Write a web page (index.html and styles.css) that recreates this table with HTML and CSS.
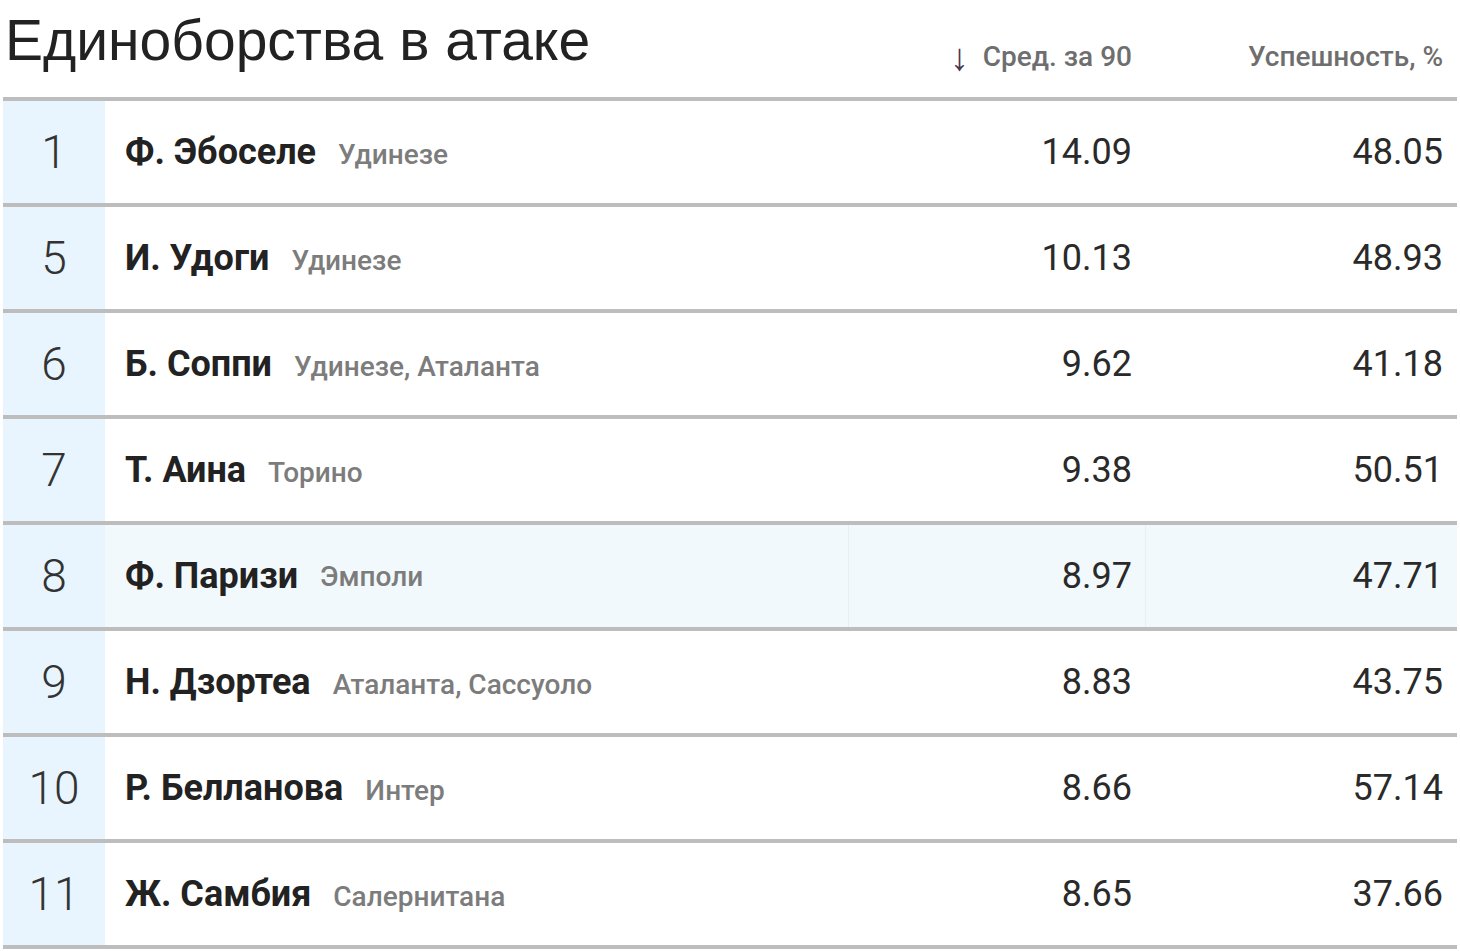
FILE: index.html
```html
<!DOCTYPE html>
<html lang="ru">
<head>
<meta charset="utf-8">
<title>Единоборства в атаке</title>
<link rel="stylesheet" href="styles.css">
</head>
<body>
<div class="board">
  <div class="head">
    <h1 class="title">Единоборства в атаке</h1>
    <div class="hcell sorted"><span class="arrow">↓</span>Сред. за 90</div>
    <div class="hcell">Успешность, %</div>
  </div>
  <div class="row">
    <div class="rank">1</div>
    <div class="player"><span class="name">Ф. Эбоселе</span><span class="team">Удинезе</span></div>
    <div class="num">14.09</div>
    <div class="num last">48.05</div>
  </div>
  <div class="row">
    <div class="rank">5</div>
    <div class="player"><span class="name">И. Удоги</span><span class="team">Удинезе</span></div>
    <div class="num">10.13</div>
    <div class="num last">48.93</div>
  </div>
  <div class="row">
    <div class="rank">6</div>
    <div class="player"><span class="name">Б. Соппи</span><span class="team">Удинезе, Аталанта</span></div>
    <div class="num">9.62</div>
    <div class="num last">41.18</div>
  </div>
  <div class="row">
    <div class="rank">7</div>
    <div class="player"><span class="name">Т. Аина</span><span class="team">Торино</span></div>
    <div class="num">9.38</div>
    <div class="num last">50.51</div>
  </div>
  <div class="row hover">
    <div class="rank">8</div>
    <div class="player"><span class="name">Ф. Паризи</span><span class="team">Эмполи</span></div>
    <div class="num">8.97</div>
    <div class="num last">47.71</div>
  </div>
  <div class="row">
    <div class="rank">9</div>
    <div class="player"><span class="name">Н. Дзортеа</span><span class="team">Аталанта, Сассуоло</span></div>
    <div class="num">8.83</div>
    <div class="num last">43.75</div>
  </div>
  <div class="row">
    <div class="rank">10</div>
    <div class="player"><span class="name">Р. Белланова</span><span class="team">Интер</span></div>
    <div class="num">8.66</div>
    <div class="num last">57.14</div>
  </div>
  <div class="row">
    <div class="rank">11</div>
    <div class="player"><span class="name">Ж. Самбия</span><span class="team">Салернитана</span></div>
    <div class="num">8.65</div>
    <div class="num last">37.66</div>
  </div>
</div>
</body>
</html>
```

FILE: styles.css
```css
html, body {
  margin: 0;
  padding: 0;
  background: #ffffff;
}

.board {
  width: 1454px;
  margin-left: 3px;
  font-family: Roboto, "Noto Sans", sans-serif;
}

.head,
.row {
  display: grid;
  grid-template-columns: 102px 743px 297px 312px;
  border-bottom: 4px solid #bdbdbd;
}

.head {
  height: 97px;
  align-items: end;
}

.title {
  grid-column: 1 / 3;
  margin: 0 0 28px 2px;
  font-family: "Liberation Sans", Arial, sans-serif;
  font-weight: 400;
  font-size: 57px;
  line-height: 57px;
  color: #222222;
  white-space: nowrap;
}

.hcell {
  display: flex;
  align-items: center;
  justify-content: flex-end;
  padding-right: 13px;
  margin-bottom: 24px;
  font-size: 28px;
  line-height: 32px;
  font-weight: 500;
  color: #6e6e6e;
}

.hcell:last-child {
  padding-right: 14px;
}

.arrow {
  color: #4a3550;
  margin-right: 14px;
  font-size: 38px;
  line-height: 32px;
  font-weight: 400;
}

.row {
  height: 102px;
  align-items: stretch;
}

.rank {
  background: #e8f5fe;
  display: flex;
  align-items: center;
  justify-content: center;
  font-size: 46px;
  font-weight: 300;
  color: #333333;
}

.player {
  display: flex;
  align-items: baseline;
  align-self: center;
  padding-left: 20px;
  gap: 22px;
}

.name {
  font-size: 36px;
  font-weight: 700;
  color: #222222;
}

.team {
  font-size: 28px;
  font-weight: 500;
  color: #7c7c7c;
}

.num {
  display: flex;
  align-items: center;
  justify-content: flex-end;
  padding-right: 13px;
  font-size: 36px;
  font-weight: 400;
  color: #2a2a2a;
}

.num.last {
  padding-right: 14px;
}

.row.hover .player,
.row.hover .num {
  background: #f2f9fc;
  align-self: stretch;
}

.row.hover .player {
  align-items: center;
}

.row.hover .num {
  border-left: 1px solid #e4f0f6;
}
```
